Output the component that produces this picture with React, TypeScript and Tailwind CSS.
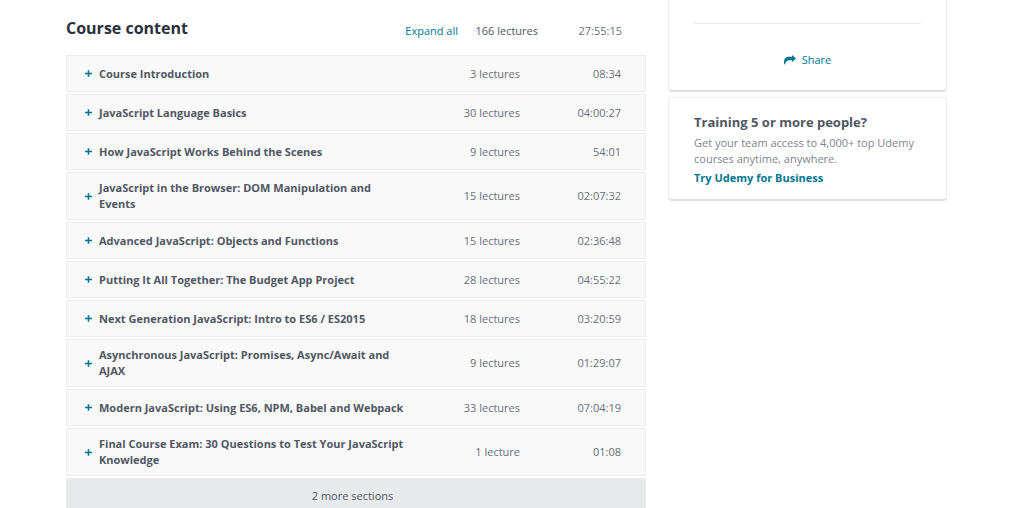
import React, { useState } from 'react';

interface Section {
  title: string;
  lectures: number;
  duration: string;
}

const sections: Section[] = [
  { title: 'Course Introduction', lectures: 3, duration: '08:34' },
  { title: 'JavaScript Language Basics', lectures: 30, duration: '04:00:27' },
  { title: 'How JavaScript Works Behind the Scenes', lectures: 9, duration: '54:01' },
  { title: 'JavaScript in the Browser: DOM Manipulation and Events', lectures: 15, duration: '02:07:32' },
  { title: 'Advanced JavaScript: Objects and Functions', lectures: 15, duration: '02:36:48' },
  { title: 'Putting It All Together: The Budget App Project', lectures: 28, duration: '04:55:22' },
  { title: 'Next Generation JavaScript: Intro to ES6 / ES2015', lectures: 18, duration: '03:20:59' },
  { title: 'Asynchronous JavaScript: Promises, Async/Await and AJAX', lectures: 9, duration: '01:29:07' },
  { title: 'Modern JavaScript: Using ES6, NPM, Babel and Webpack', lectures: 33, duration: '07:04:19' },
  { title: 'Final Course Exam: 30 Questions to Test Your JavaScript Knowledge', lectures: 1, duration: '01:08' },
];

const PlusIcon: React.FC = () => (
  <svg viewBox="0 0 7 7" className="h-[7px] w-[7px] shrink-0 fill-[#007791]" aria-hidden="true">
    <path d="M2.7 0.3h1.6v2.4H7v1.6H4.3v2.4H2.7V4.3H0V2.7h2.7z" />
  </svg>
);

const MinusIcon: React.FC = () => (
  <svg viewBox="0 0 7 7" className="h-[7px] w-[7px] shrink-0 fill-[#007791]" aria-hidden="true">
    <path d="M0 2.7h7v1.6H0z" />
  </svg>
);

const ShareIcon: React.FC = () => (
  <svg viewBox="0 0 12 10" className="h-[10px] w-3 fill-[#007791]" aria-hidden="true">
    <path d="M8 0l4 3.5L8 7V5.2H5.8C3.1 5.2 1.6 6 1.3 9.6H.7C.2 8.7 0 7.9 0 6.9 0 3.4 2.1 1.8 5.6 1.8H8z" />
  </svg>
);

interface SectionRowProps {
  section: Section;
  open: boolean;
  onToggle: () => void;
}

const SectionRow: React.FC<SectionRowProps> = ({ section, open, onToggle }) => (
  <button
    type="button"
    aria-expanded={open}
    onClick={onToggle}
    className="flex min-h-[37px] w-full cursor-pointer items-center border border-[#ececee] bg-[#f9f9f9] py-[7px] pr-6 pl-[18px] text-left"
  >
    {open ? <MinusIcon /> : <PlusIcon />}
    <span className="ml-[7px] min-w-0 flex-1 pr-8 font-bold text-[#505763]">{section.title}</span>
    <span className="w-20 shrink-0 text-right text-[#686f7a]">
      {section.lectures} {section.lectures === 1 ? 'lecture' : 'lectures'}
    </span>
    <span className="w-[101px] shrink-0 text-right text-[#686f7a]">{section.duration}</span>
  </button>
);

export default function App() {
  const [opened, setOpened] = useState<string[]>([]);

  const allOpen = opened.length === sections.length;

  const toggle = (title: string) => {
    setOpened(prev => (prev.includes(title) ? prev.filter(t => t !== title) : [...prev, title]));
  };

  return (
    <div className="flex h-screen items-start gap-[22px] overflow-hidden bg-white pr-[77px] pl-[66px] font-['Open_Sans','Noto_Sans',sans-serif] text-[11px] leading-4 text-[#505763]">
      <main className="min-w-0 flex-1 pt-4">
        <div className="mb-[15px] flex items-center pr-6">
          <h2 className="flex-1 text-[16px] leading-6 font-bold text-[#29303b]">Course content</h2>
          <button
            type="button"
            onClick={() => setOpened(allOpen ? [] : sections.map(s => s.title))}
            className="mt-[6px] cursor-pointer text-[#007791]"
          >
            {allOpen ? 'Collapse all' : 'Expand all'}
          </button>
          <span className="mt-[6px] w-20 text-right text-[#505763]">166 lectures</span>
          <span className="mt-[6px] w-[84px] text-right text-[#686f7a]">27:55:15</span>
        </div>

        <div className="flex flex-col gap-[2px]">
          {sections.map(section => (
            <SectionRow
              key={section.title}
              section={section}
              open={opened.includes(section.title)}
              onToggle={() => toggle(section.title)}
            />
          ))}
          <button type="button" className="h-9 w-full cursor-pointer bg-[#e8e9eb] pr-[7px] text-[#505763]">
            2 more sections
          </button>
        </div>
      </main>

      <aside className="flex w-[279px] shrink-0 flex-col gap-[5px]">
        <div className="rounded-b-[4px] border border-t-0 border-b-2 border-[#ececec] border-b-[#dedfe0] px-[25px] pt-[23px] pb-[22px]">
          <hr className="border-[#e8e9eb]" />
          <div className="mt-7 flex justify-center">
            <button type="button" className="flex cursor-pointer items-center gap-[6px] text-[#007791]">
              <ShareIcon />
              Share
            </button>
          </div>
        </div>

        <div className="rounded-[4px] border border-b-2 border-[#ececec] border-b-[#dedfe0] px-[25px] pt-[14px] pb-[13px]">
          <h3 className="text-[13px] leading-5 font-bold text-[#505763]">Training 5 or more people?</h3>
          <p className="mt-[3px] text-[#7d858c]">Get your team access to 4,000+ top Udemy courses anytime, anywhere.</p>
          <a href="#business" className="mt-[3px] block font-bold text-[#007791]">
            Try Udemy for Business
          </a>
        </div>
      </aside>
    </div>
  );
}
